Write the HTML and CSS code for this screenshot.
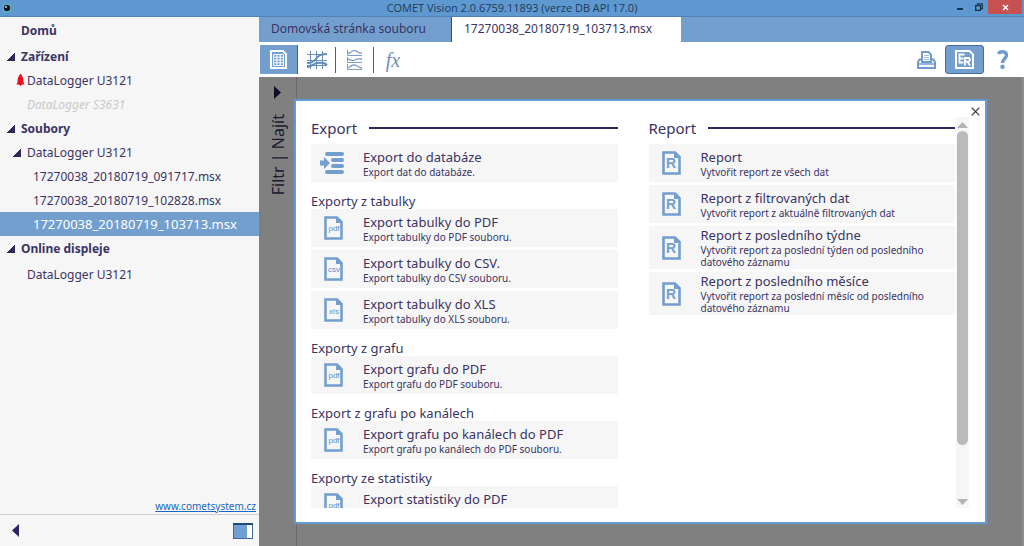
FILE: index.html
```html
<!DOCTYPE html>
<html lang="cs">
<head>
<meta charset="utf-8">
<title>COMET Vision</title>
<link rel="stylesheet" href="styles.css">
</head>
<body>
<svg width="0" height="0" class="defs" aria-hidden="true">
  <symbol id="page" viewBox="0 0 19 24"><path d="M1.500 1.500H13L17.500 6V22.500H1.500Z" fill="none" stroke="currentColor" stroke-width="2.600"/><path d="M12 1V7H18Z" fill="currentColor"/></symbol>
</svg>
<header class="titlebar">
  <svg class="app-icon" viewBox="0 0 10 10"><circle cx="5" cy="5" r="4.500" fill="#5fc0c4"/><circle cx="5" cy="5" r="3.200" fill="#0b1420"/><circle cx="4" cy="4" r="1" fill="#cde"/></svg>
  <h1>COMET Vision 2.0.6759.11893 (verze DB API 17.0)</h1>
  <div class="window-buttons">
    <button aria-label="Minimalizovat"><svg width="8" height="8" viewBox="0 0 8 8"><path d="M1 6H7" stroke="#16344f" stroke-width="2"/></svg></button>
    <button aria-label="Obnovit"><svg width="8" height="8" viewBox="0 0 8 8"><path d="M2.500 2V.8H7.300V5.500H6M.7 2.700H5.500V7.300H.7Z" fill="none" stroke="#16344f" stroke-width="1.300"/></svg></button>
    <button class="close" aria-label="Zavřít"><svg width="7" height="7" viewBox="0 0 7 7"><path d="M1 1L6 6M6 1L1 6" stroke="#fff" stroke-width="1.400"/></svg></button>
  </div>
</header>
<div class="app">
  <aside class="sidebar">
    <nav class="tree">
      <button class="row home">Domů</button>
      <button class="row group"><i class="caret"></i>Zařízení</button>
      <button class="row device"><svg class="bell" viewBox="0 0 8 12"><path d="M4 0C5 0 5.200 1 5.200 1.500C6.800 3 6.800 6 7 8L8 10.500H5.500L4 12L2.500 10.500H0L1 8C1.200 6 1.200 3 2.800 1.500C2.800 1 3 0 4 0Z" fill="#e8101f"/></svg>DataLogger U3121</button>
      <button class="row device off">DataLogger S3631</button>
      <button class="row group"><i class="caret"></i>Soubory</button>
      <button class="row sub"><i class="caret"></i>DataLogger U3121</button>
      <button class="row file">17270038_20180719_091717.msx</button>
      <button class="row file">17270038_20180719_102828.msx</button>
      <button class="row file selected">17270038_20180719_103713.msx</button>
      <button class="row group"><i class="caret"></i>Online displeje</button>
      <button class="row device last">DataLogger U3121</button>
    </nav>
    <a class="site" href="#">www.cometsystem.cz</a>
    <footer class="side-foot">
      <button aria-label="Skrýt panel"><svg width="7" height="13" viewBox="0 0 7 13"><path d="M7 0V13L0 6.500Z" fill="#2b2460"/></svg></button>
      <button aria-label="Rozložení"><svg width="20" height="16" viewBox="0 0 20 16"><rect x=".5" y=".5" width="19" height="15" fill="#fff" stroke="#3b699c"/><rect x="1" y="1" width="13" height="14" fill="#6f9fd3"/><rect width="20" height="2" fill="#1f4a7c"/></svg></button>
    </footer>
  </aside>
  <main class="main">
    <div class="tabs">
      <button class="tab">Domovská stránka souboru</button>
      <button class="tab current">17270038_20180719_103713.msx</button>
    </div>
    <div class="toolbar">
      <button class="tool on" aria-label="Tabulka"><svg width="17" height="19" viewBox="0 0 17 19"><path d="M1 1H13L16 4V18H1Z" fill="none" stroke="#fff" stroke-width="2"/><path d="M3.500 4.500H13.500V15.500H3.500ZM3.500 7.200H13.500M3.500 10H13.500M3.500 12.800H13.500M6.800 4.500V15.500M10.200 4.500V15.500" fill="none" stroke="#fff"/></svg></button>
      <button class="tool" aria-label="Graf"><svg width="22" height="20" viewBox="0 0 22 20"><path d="M1 4.500H21M1 10.500H21M1 15.500H21M4.500 1V19M10.500 1V19M16.500 1V19" stroke="#6c91bd"/><path d="M1 13C8 13 9 10 11 7.500S15 4 21 4" fill="none" stroke="#5e8ec2" stroke-width="2"/><path d="M1 17C6 17 7 13.500 11 13S18 12 21 15" fill="none" stroke="#5e8ec2" stroke-width="2"/></svg></button>
      <button class="tool" aria-label="Graf po kanálech"><svg width="17" height="20" viewBox="0 0 17 20"><g fill="none" stroke="#7c9fc8"><path d="M1.500 0V5.500H16M1.500 7V12.500H16M1.500 14V19.500H16"/><path d="M1 3H4C6 0 10 0 12 2S14 3 16 3M1 9C4 9 6 12 9 10S13 9 16 9M1 18C4 18 4 15 8 15S12 18 16 18" stroke-width="1.300"/></g></svg></button>
      <button class="tool fx" aria-label="Statistiky">fx</button>
      <span class="spacer"></span>
      <button class="tool plain" aria-label="Tisk"><svg width="19" height="18" viewBox="0 0 19 18"><g fill="none" stroke="#6f9bcf" stroke-width="2"><path d="M5 11V1H11.500L14 3.500V11Z"/><path d="M5 8.500H2.500L1 11V17H18V11L16.500 8.500H14"/><path d="M1 13H18" stroke-width="1.500"/></g><path d="M7 4.500H12M7 6.500H12M7 8.500H12" stroke="#9dbbe0"/></svg></button>
      <button class="tool er" aria-label="Export a report"><svg width="19" height="19" viewBox="0 0 19 19"><path d="M1 1H14.500L18 4.500V18H1Z" fill="none" stroke="#fff" stroke-width="2"/><path d="M9.500 4.500H4.500V12.500H8.500M4.500 8.500H8.500" fill="none" stroke="#fff" stroke-width="1.800"/><path d="M10 15.500V8H13C15.500 8 15.500 11.700 13 11.700H10M12.500 11.700L15 15.500" fill="none" stroke="#fff" stroke-width="1.800"/></svg></button>
      <button class="tool plain" aria-label="Nápověda"><svg width="12" height="19" viewBox="0 0 12 19"><path d="M1.500 4C2.500 1 9.500 .5 9.500 5.200C9.500 8.500 5.500 8.500 5.500 13" fill="none" stroke="#6f9bcf" stroke-width="3.400"/><circle cx="5.500" cy="16.800" r="2.200" fill="#6f9bcf"/></svg></button>
    </div>
    <div class="workspace">
      <div class="filter">
        <button aria-label="Rozbalit filtr"><svg width="7" height="13" viewBox="0 0 7 13"><path d="M0 0V13L7 6.500Z" fill="#120c28"/></svg></button>
        <span>Filtr | Najít</span>
      </div>
      <section class="dialog" role="dialog" aria-label="Export a report">
        <button class="dismiss" aria-label="Zavřít"><svg width="9" height="9" viewBox="0 0 9 9"><path d="M.7 .7L8.300 8.300M8.300 .7L.7 8.300" stroke="#333" stroke-width="1.200"/></svg></button>
        <div class="columns">
          <div class="column">
            <h2>Export</h2>
            <button class="card"><svg class="db" viewBox="0 0 24 22"><g stroke="#739fce" stroke-width="4" stroke-linecap="round"><path d="M7 2H22M13 8H22M13 14H22M7 20H22"/></g><path d="M0 8.500H4V5L10 11L4 17V13.500H0Z" fill="#739fce"/></svg><span><b>Export do databáze</b><small>Export dat do databáze.</small></span></button>
            <h3>Exporty z tabulky</h3>
            <div class="stack">
              <button class="card"><svg class="doc"><use href="#page"/><text x="10" y="15">pdf</text></svg><span><b>Export tabulky do PDF</b><small>Export tabulky do PDF souboru.</small></span></button>
              <button class="card"><svg class="doc"><use href="#page"/><text x="10" y="15">csv</text></svg><span><b>Export tabulky do CSV.</b><small>Export tabulky do CSV souboru.</small></span></button>
              <button class="card"><svg class="doc"><use href="#page"/><text x="10" y="16">xls</text></svg><span><b>Export tabulky do XLS</b><small>Export tabulky do XLS souboru.</small></span></button>
            </div>
            <h3>Exporty z grafu</h3>
            <button class="card"><svg class="doc"><use href="#page"/><text x="10" y="15">pdf</text></svg><span><b>Export grafu do PDF</b><small>Export grafu do PDF souboru.</small></span></button>
            <h3>Export z grafu po kanálech</h3>
            <button class="card"><svg class="doc"><use href="#page"/><text x="10" y="15">pdf</text></svg><span><b>Export grafu po kanálech do PDF</b><small>Export grafu po kanálech do PDF souboru.</small></span></button>
            <h3>Exporty ze statistiky</h3>
            <button class="card"><svg class="doc"><use href="#page"/><text x="10" y="15">pdf</text></svg><span><b>Export statistiky do PDF</b><small>&nbsp;</small></span></button>
          </div>
          <div class="column">
            <h2>Report</h2>
            <div class="stack">
              <button class="card"><svg class="doc rep"><use href="#page"/><text x="9" y="17">R</text></svg><span><b>Report</b><small>Vytvořit report ze všech dat</small></span></button>
              <button class="card"><svg class="doc rep"><use href="#page"/><text x="9" y="17">R</text></svg><span><b>Report z filtrovaných dat</b><small>Vytvořit report z aktuálně filtrovaných dat</small></span></button>
              <button class="card"><svg class="doc rep"><use href="#page"/><text x="9" y="17">R</text></svg><span><b>Report z posledního týdne</b><small>Vytvořit report za poslední týden od posledního datového záznamu</small></span></button>
              <button class="card"><svg class="doc rep"><use href="#page"/><text x="9" y="17">R</text></svg><span><b>Report z posledního měsíce</b><small>Vytvořit report za poslední měsíc od posledního datového záznamu</small></span></button>
            </div>
          </div>
        </div>
        <div class="scrollbar" aria-hidden="true">
          <svg width="11" height="6" viewBox="0 0 11 6"><path d="M0 6L5.500 0L11 6Z" fill="#b4b4b4"/></svg>
          <div class="track"><div class="thumb"></div></div>
          <svg width="11" height="6" viewBox="0 0 11 6"><path d="M0 0L5.500 6L11 0Z" fill="#b4b4b4"/></svg>
        </div>
      </section>
    </div>
  </main>
</div>
</body>
</html>
```
FILE: styles.css
```css
* { box-sizing: border-box; }
html, body { height: 100%; }
body {
  margin: 0;
  display: flex;
  flex-direction: column;
  overflow: hidden;
  font-family: "Noto Sans", "Open Sans", sans-serif;
  font-size: 12px;
  color: #3a3463;
  background: #fff;
}
button {
  display: flex;
  align-items: center;
  margin: 0;
  padding: 0;
  border: 0;
  background: none;
  font: inherit;
  color: inherit;
  text-align: left;
}
svg { display: block; flex: none; }
.defs { position: absolute; }

.titlebar {
  display: grid;
  grid-template-columns: 1fr auto 1fr;
  align-items: center;
  height: 17px;
  background: #5e98d0;
  border-bottom: 1px solid #4f83b8;
}
.titlebar h1 { margin: 0; font: 11px/16px "Open Sans", sans-serif; color: #1f3a58; }
.app-icon { width: 10px; height: 10px; margin-left: 2px; }
.window-buttons { display: flex; justify-content: flex-end; align-self: start; padding-right: 2px; }
.window-buttons button { width: 19px; height: 14px; justify-content: center; }
.window-buttons .close { width: 34px; background: #c75050; }

.app { flex: 1; min-height: 0; display: grid; grid-template-columns: 259px 1fr; }

.sidebar { display: flex; flex-direction: column; background: #f6f6f6; }
.tree { flex: 1; }
.row { width: 100%; height: 24px; padding-left: 27px; position: relative; }
.home { height: 27px; padding-left: 21px; font-weight: 700; }
.group { padding-left: 6px; gap: 6px; font-weight: 700; }
.sub { padding-left: 12px; gap: 6px; }
.off { color: #c9c9c9; font-style: italic; }
.file { padding-left: 33px; }
.selected { background: #739fce; color: #fff; font-size: 13px; }
.last { height: 28px; }
.bell { width: 9px; height: 12px; position: absolute; left: 16px; }
.caret { width: 9px; height: 9px; background: linear-gradient(135deg, transparent 50%, #2e2858 50%); }
.site { align-self: flex-end; padding-right: 3px; font-size: 10px; line-height: 15px; color: #1a67c0; }
.side-foot {
  display: flex;
  align-items: center;
  justify-content: space-between;
  height: 32px;
  padding: 0 6px 0 12px;
  border-top: 1px solid #cfcfcf;
}

.main { display: flex; flex-direction: column; min-width: 0; }
.tabs { display: flex; height: 25px; background: #739fce; }
.tab { width: 193px; padding: 0 12px 2px; border-right: 1px solid #354f86; }
.tab.current { width: 229px; border: 0; background: #fff; }
.toolbar { display: flex; align-items: center; height: 35px; padding: 0 2px 0 1px; }
.tool { width: 38px; height: 29px; justify-content: center; border-right: 1px solid #4a5d86; }
.tool:not(.on):not(.er) { height: 26px; }
.tool.on, .tool.er { background: #739fce; }
.tool.fx { border: 0; font: italic 20px/24px "Liberation Serif", serif; color: #6c91bd; }
.tool.plain { border: 0; }
.tool.er { width: 39px; border: 1px solid #4a6b9c; border-radius: 3px; }
.spacer { flex: 1; }

.workspace { flex: 1; min-height: 0; display: flex; position: relative; background: #808080; border-right: 2px solid #8e8e8e; }
.filter {
  width: 38px;
  display: flex;
  flex-direction: column;
  align-items: center;
  gap: 15px;
  padding-top: 9px;
  border-right: 1px solid #6a6a6a;
}
.filter span { writing-mode: vertical-rl; transform: rotate(180deg); font-size: 16px; line-height: 20px; color: #1c1830; }

.dialog {
  position: absolute;
  inset: 22px 35px 22px 35px;
  display: flex;
  padding: 16px 16px 14px 15px;
  border: 2px solid #659bd3;
  background: #fff;
}
.dismiss { position: absolute; top: 6px; right: 5px; }
.columns { flex: 1; display: grid; grid-template-columns: 1fr 1fr; gap: 31px; overflow: hidden; }
.column { min-width: 0; }
h2 {
  display: flex;
  align-items: center;
  gap: 12px;
  margin: 0 0 5px;
  font-size: 15px;
  line-height: 22px;
  font-weight: 400;
}
h2::after { content: ""; flex: 1; height: 2px; background: #2e2858; }
h3 { margin: 0; padding-top: 11px; font-size: 13px; line-height: 16px; font-weight: 400; }
.stack { display: grid; gap: 3px; }
.card {
  width: 100%;
  min-height: 38px;
  padding: 1px 12px 1px 13px;
  background: #f6f6f6;
}
.card span { flex: 1; min-width: 0; }
.card b { display: block; margin-bottom: 1px; font-size: 13px; line-height: 16px; font-weight: 400; }
.card small { display: block; font-size: 10px; line-height: 12px; }
.doc { width: 19px; height: 24px; margin-right: 20px; color: #739fce; }
.doc text { font: 8px "Liberation Sans", sans-serif; text-anchor: middle; fill: #5b8fc9; }
.doc.rep text { font-size: 14px; font-weight: 700; fill: #739fce; }
.db { width: 24px; height: 22px; margin: 0 19px 0 -4px; }
.scrollbar {
  width: 13px;
  display: flex;
  flex-direction: column;
  align-items: center;
  gap: 3px;
  padding: 5px 0 3px;
  margin-left: 1px;
  background: #f6f6f6;
}
.track { flex: 1; width: 11px; }
.thumb { height: 86%; border-radius: 6px; background: #bababa; }
```
